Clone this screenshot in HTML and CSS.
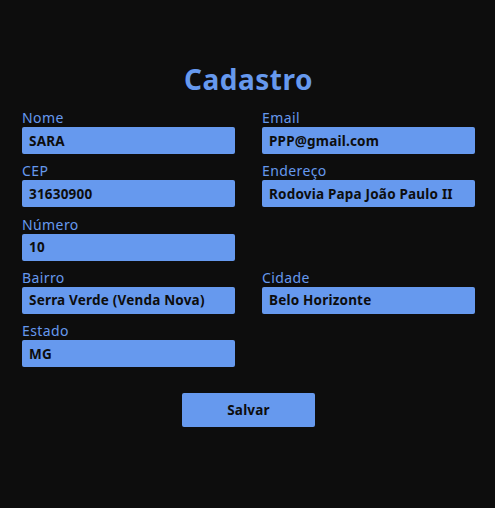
FILE: index.html
```html
<!DOCTYPE html>
<html lang="pt-BR">

<head>
    <meta charset="UTF-8">
    <meta name="viewport" content="width=device-width, initial-scale=1.0">
    <title>Cadastro</title>
    <link rel="stylesheet" href="styles.css">
</head>

<body>
    <div class="container">
        <h1>Cadastro</h1>
        <form class="form">
            <div class="form-item">
                <label for="nome">Nome</label>
                <input type="text" id="nome" value="SARA">
            </div>
            <div class="form-item">
                <label for="email">Email</label>
                <input type="text" id="email" value="PPP@gmail.com">
            </div>
            <div class="form-item">
                <label for="cep">CEP</label>
                <input type="text" id="cep" value="31630900">
            </div>
            <div class="form-item">
                <label for="endereco">Endereço</label>
                <input type="text" id="endereco" value="Rodovia Papa João Paulo II">
            </div>
            <div class="form-item">
                <label for="numero">Número</label>
                <input type="text" id="numero" value="10">
            </div>
            <div class="form-item empty"></div>
            <div class="form-item">
                <label for="bairro">Bairro</label>
                <input type="text" id="bairro" value="Serra Verde (Venda Nova)">
            </div>
            <div class="form-item">
                <label for="cidade">Cidade</label>
                <input type="text" id="cidade" value="Belo Horizonte">
            </div>
            <div class="form-item">
                <label for="estado">Estado</label>
                <input type="text" id="estado" value="MG">
            </div>
            <div class="form-actions">
                <button type="button">Salvar</button>
            </div>
        </form>
    </div>
</body>

</html>
```

FILE: styles.css
```css
* {
    margin: 0;
    padding: 0;
    box-sizing: border-box;
}

body {
    background-color: #0d0d0d;
    font-family: "Noto Sans", "DejaVu Sans", sans-serif;
    color: #6699ee;
}

.container {
    width: 453px;
    margin-left: 22px;
    padding-top: 64px;
}

.container h1 {
    text-align: center;
    font-size: 28px;
    line-height: 31px;
    font-weight: 700;
    letter-spacing: 0.5px;
    margin-bottom: 15px;
}

.form {
    display: grid;
    grid-template-columns: 1fr 1fr;
    column-gap: 27px;
    row-gap: 9.3px;
}

.form-item label {
    display: block;
    font-size: 14px;
    line-height: 16px;
    height: 17px;
    letter-spacing: 0.4px;
}

.form-item input {
    display: block;
    width: 100%;
    height: 27px;
    border: none;
    border-radius: 2px;
    outline: none;
    background-color: #6699ee;
    color: #0d0d0d;
    font-family: inherit;
    font-size: 13.5px;
    font-weight: 700;
    letter-spacing: 0.2px;
    padding-left: 7px;
}

.form-actions {
    grid-column: 1 / 3;
    display: flex;
    justify-content: center;
    padding-top: 17px;
}

.form-actions button {
    width: 133px;
    height: 34px;
    border: none;
    border-radius: 2px;
    background-color: #6699ee;
    color: #0d0d0d;
    font-family: inherit;
    font-size: 13.5px;
    font-weight: 700;
    letter-spacing: 0.2px;
    cursor: pointer;
}
```
